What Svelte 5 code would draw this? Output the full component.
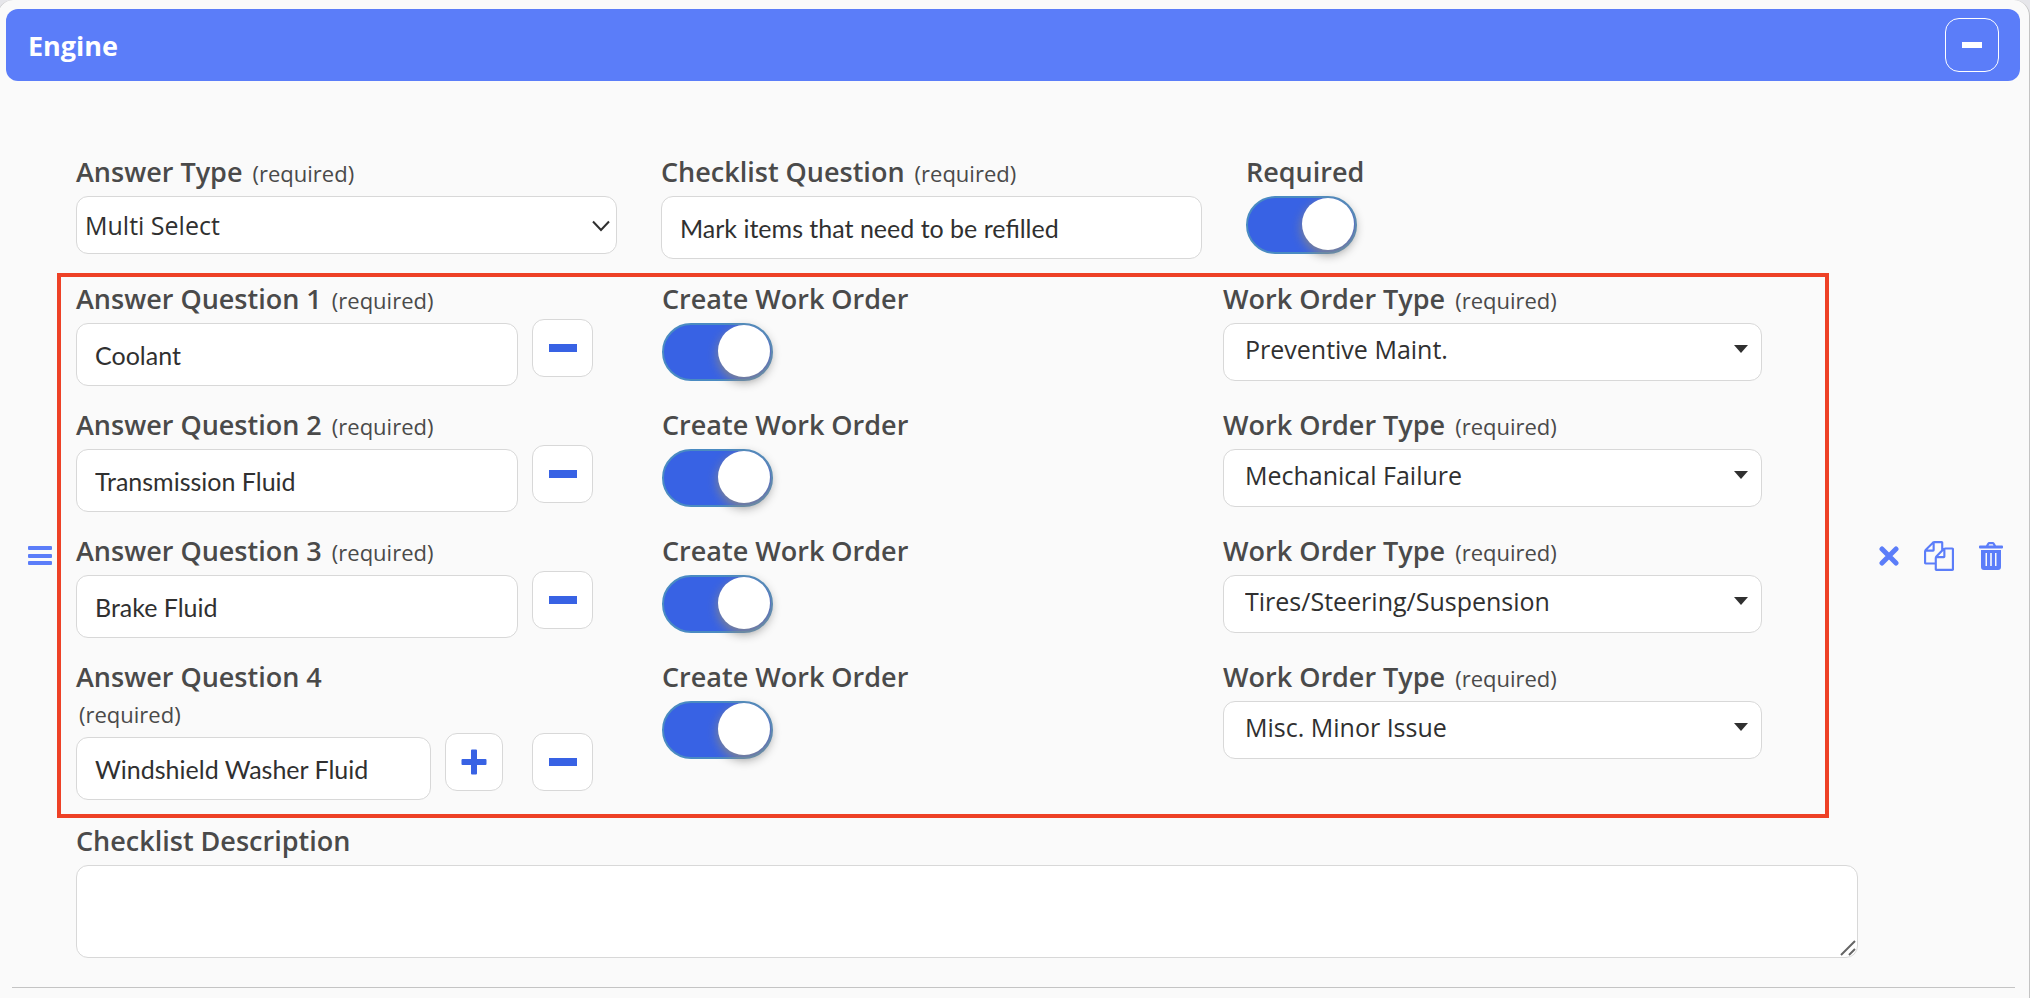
<script>
	let open = true;
	let required = true;
	let answerType = 'Multi Select';
	let question = 'Mark items that need to be refilled';
	let description = '';

	const answerTypes = ['Multi Select', 'Single Select', 'Yes / No', 'Text'];
	const orderTypes = [
		'Preventive Maint.',
		'Mechanical Failure',
		'Tires/Steering/Suspension',
		'Misc. Minor Issue'
	];

	let answers = [
		{ text: 'Coolant', workOrder: true, type: 'Preventive Maint.' },
		{ text: 'Transmission Fluid', workOrder: true, type: 'Mechanical Failure' },
		{ text: 'Brake Fluid', workOrder: true, type: 'Tires/Steering/Suspension' },
		{ text: 'Windshield Washer Fluid', workOrder: true, type: 'Misc. Minor Issue' }
	];

	function addAnswer() {
		answers = [...answers, { text: '', workOrder: false, type: orderTypes[0] }];
	}

	function removeAnswer(index) {
		answers = answers.filter((_, i) => i != index);
	}
</script>

<main class="panel">
	<header class="bar">
		<h2>Engine</h2>
		<button class="collapse" aria-label="Collapse section" on:click={() => (open = !open)}>
			<svg width="20" height="6" viewBox="0 0 20 6"><rect width="20" height="6" /></svg>
		</button>
	</header>

	{#if open}
		<section class="item">
			<button class="icon handle" aria-label="Reorder">
				<svg width="24" height="20" viewBox="0 0 24 20">
					<rect width="24" height="4" rx="1" />
					<rect y="8" width="24" height="4" rx="1" />
					<rect y="15" width="24" height="4" rx="1" />
				</svg>
			</button>

			<div class="fields">
				<div class="top-row">
					<div class="field">
						<label for="answer-type">Answer Type <small>(required)</small></label>
						<div class="control">
							<select id="answer-type" class="plain" bind:value={answerType}>
								{#each answerTypes as type}
									<option>{type}</option>
								{/each}
							</select>
							<svg class="chevron" width="18" height="12" viewBox="0 0 18 12">
								<path d="M1 1.5l8 8.500l8-8.500" />
							</svg>
						</div>
					</div>
					<div class="field">
						<label for="question">Checklist Question <small>(required)</small></label>
						<input id="question" type="text" bind:value={question} />
					</div>
					<div class="field">
						<label for="required">Required</label>
						<input id="required" type="checkbox" class="toggle" bind:checked={required} />
					</div>
				</div>

				<div class="answers">
					{#each answers as answer, i}
						<div class="answer-row">
							<div class="answer">
								<div class="field">
									<label for="answer-{i}">Answer Question {i + 1} <small>(required)</small></label>
									<input id="answer-{i}" type="text" bind:value={answer.text} />
								</div>
								{#if i == answers.length - 1}
									<button class="square add" aria-label="Add answer" on:click={addAnswer}>
										<svg width="26" height="26" viewBox="0 0 26 26">
											<path
												d="M11 0.500h4q1 0 1 1v8.500h8.500q1 0 1 1v4q0 1-1 1h-8.500v8.500q0 1-1 1h-4q-1 0-1-1v-8.500h-8.500q-1 0-1-1v-4q0-1 1-1h8.500v-8.500q0-1 1-1z"
											/>
										</svg>
									</button>
								{/if}
								<button class="square" aria-label="Remove answer" on:click={() => removeAnswer(i)}>
									<svg width="28" height="8" viewBox="0 0 28 8"><rect width="28" height="8" /></svg>
								</button>
							</div>
							<div class="field">
								<label for="order-{i}">Create Work Order</label>
								<input
									id="order-{i}"
									type="checkbox"
									class="toggle"
									bind:checked={answer.workOrder}
								/>
							</div>
							<div class="field">
								<label for="order-type-{i}">Work Order Type <small>(required)</small></label>
								<div class="control">
									<select id="order-type-{i}" class="boxed" bind:value={answer.type}>
										{#each orderTypes as type}
											<option>{type}</option>
										{/each}
									</select>
									<svg class="caret" width="14" height="8" viewBox="0 0 14 8">
										<path d="M0 0h14l-7 8z" />
									</svg>
								</div>
							</div>
						</div>
					{/each}
				</div>

				<div class="field">
					<label for="description">Checklist Description</label>
					<div class="control">
						<textarea id="description" bind:value={description}></textarea>
						<svg class="grip" width="16" height="16" viewBox="0 0 16 16">
							<path d="M1 15l14-14M9 15l6-6" />
						</svg>
					</div>
				</div>
			</div>

			<div class="actions">
				<button class="icon" aria-label="Clear">
					<svg width="20" height="20" viewBox="0 0 20 20">
						<path class="cross" d="M3 3l14 14M17 3l-14 14" />
					</svg>
				</button>
				<button class="icon" aria-label="Duplicate">
					<svg width="30" height="30" viewBox="0 0 1792 1792">
						<path
							d="M1696 384q40 0 68 28t28 68v1216q0 40-28 68t-68 28h-960q-40 0-68-28t-28-68v-288h-544q-40 0-68-28t-28-68v-672q0-40 20-88t48-76l408-408q28-28 76-48t88-20h416q40 0 68 28t28 68v328q68-40 128-40h416zm-544 213l-299 299h299v-299zm-640-384l-299 299h299v-299zm196 647l316-316v-416h-384v416q0 40-28 68t-68 28h-416v640h512v-256q0-40 20-88t48-76zm956 804v-1152h-384v416q0 40-28 68t-68 28h-416v640h896z"
						/>
					</svg>
				</button>
				<button class="icon" aria-label="Delete">
					<svg width="24" height="30" viewBox="0 0 24 30">
						<path
							fill-rule="evenodd"
							d="M1 4.500h6l1.500-2.500q.6-1 1.700-1h3.600q1.100 0 1.700 1l1.500 2.500h6q1 0 1 1v1q0 1-1 1h-22q-1 0-1-1v-1q0-1 1-1zM9.500 4.500h5l-.8-1.300h-3.400zM2 9h20v17q0 3-3 3h-14q-3 0-3-3zM6.500 12v13h1.500v-13zM11.200 12v13h1.600v-13zM16 12v13h1.500v-13z"
						/>
					</svg>
				</button>
			</div>
		</section>
		<hr />
	{/if}
</main>

<style>
	:global(body) {
		background: #e6e6ea;
	}

	.panel {
		box-sizing: border-box;
		min-height: 100vh;
		margin-left: -3px;
		padding: 9px 9px 10px 8px;
		border: 1px solid #c4c4c4;
		border-width: 0 1px;
		border-radius: 16px 16px 0 0;
		background: #fafafa;
		color: #4a4a4a;
		font-family: 'Open Sans', sans-serif;
		font-size: 25px;
	}

	.bar {
		display: flex;
		justify-content: space-between;
		align-items: center;
		box-sizing: border-box;
		height: 72px;
		padding: 0 21px 0 22px;
		border-radius: 12px;
		background: #5b7df9;
	}

	h2 {
		margin: 0;
		color: #fff;
		font-size: 27px;
		font-weight: 700;
	}

	button {
		display: flex;
		justify-content: center;
		align-items: center;
		flex: none;
		box-sizing: border-box;
		padding: 0;
		cursor: pointer;
	}

	.collapse {
		width: 54px;
		height: 54px;
		border: 1px solid #fff;
		border-radius: 14px;
		background: none;
		fill: #fff;
	}

	.item {
		display: flex;
		align-items: center;
		padding: 73px 17px 0 22px;
	}

	.icon {
		border: none;
		background: none;
		fill: #5b7df9;
	}

	.handle {
		margin-right: 24px;
	}

	.fields {
		flex: 1;
		min-width: 0;
	}

	.top-row {
		display: grid;
		grid-template-columns: 541fr 541fr 612fr;
		align-items: start;
		gap: 44px;
		margin-bottom: 14px;
	}

	.field {
		flex: 1;
		min-width: 0;
	}

	label {
		display: block;
		margin-bottom: 6px;
		font-size: 27px;
		font-weight: 600;
		line-height: 36px;
	}

	small {
		margin: 0 3px;
		font-size: 22px;
		font-weight: 400;
		line-height: 1;
	}

	input[type='text'],
	textarea,
	select {
		display: block;
		box-sizing: border-box;
		width: 100%;
		margin: 0;
		border: 1px solid #d8d8d8;
		border-radius: 12px;
		background: #fff;
		color: #303030;
	}

	input[type='text'] {
		height: 63px;
		padding: 0 18px;
		font-family: Lato, sans-serif;
		font-size: 25px;
	}

	.control {
		position: relative;
	}

	select {
		height: 58px;
		appearance: none;
		font-family: 'Open Sans', sans-serif;
		font-size: 25px;
	}

	.plain {
		padding: 0 40px 0 8px;
	}

	.boxed {
		padding: 0 40px 6px 21px;
	}

	.chevron,
	.caret,
	.grip {
		position: absolute;
		pointer-events: none;
	}

	.chevron {
		top: 24px;
		right: 7px;
		fill: none;
		stroke: #303030;
		stroke-width: 2;
	}

	.caret {
		top: 22px;
		right: 14px;
		fill: #303030;
	}

	.toggle {
		display: block;
		box-sizing: border-box;
		width: 111px;
		height: 58px;
		margin: 0;
		padding: 0;
		border: 2px solid #c4c4c4;
		border-radius: 29px;
		background: #d8d8d8;
		appearance: none;
		cursor: pointer;
	}

	.toggle::before {
		content: '';
		display: block;
		width: 52px;
		height: 52px;
		border-radius: 50%;
		background: #fff;
		box-shadow: 0 4px 11px #888;
	}

	.toggle:checked {
		border-color: #4a8bc2;
		background: #3862e4;
	}

	.toggle:checked::before {
		margin-left: 54px;
	}

	.answers {
		display: flex;
		flex-direction: column;
		gap: 21px;
		margin: 0 29px 5px -19px;
		padding: 4px 63px 14px 15px;
		border: 4px solid #ee4126;
	}

	.answer-row {
		display: grid;
		grid-template-columns: 541fr 516fr 539fr;
		align-items: start;
		gap: 45px;
	}

	.answer {
		display: flex;
		align-items: flex-end;
		gap: 14px;
		padding-right: 24px;
	}

	.square {
		width: 61px;
		height: 58px;
		margin-bottom: 9px;
		border: 1px solid #d8d8d8;
		border-radius: 12px;
		background: #fff;
		fill: #3862e4;
	}

	.add {
		width: 58px;
		margin-right: 15px;
	}

	textarea {
		height: 93px;
		padding: 12px 18px;
		font-family: Lato, sans-serif;
		font-size: 25px;
		resize: vertical;
	}

	textarea::-webkit-resizer {
		background: none;
	}

	.grip {
		right: 2px;
		bottom: 2px;
		stroke: #666;
		stroke-width: 2;
	}

	.actions {
		display: flex;
		align-items: center;
		gap: 25px;
		margin-left: 21px;
	}

	.cross {
		stroke: #5b7df9;
		stroke-width: 5;
		stroke-linecap: round;
	}

	hr {
		height: 1px;
		margin: 29px 5px 0 6px;
		border: none;
		background: #c4c4c4;
	}
</style>
